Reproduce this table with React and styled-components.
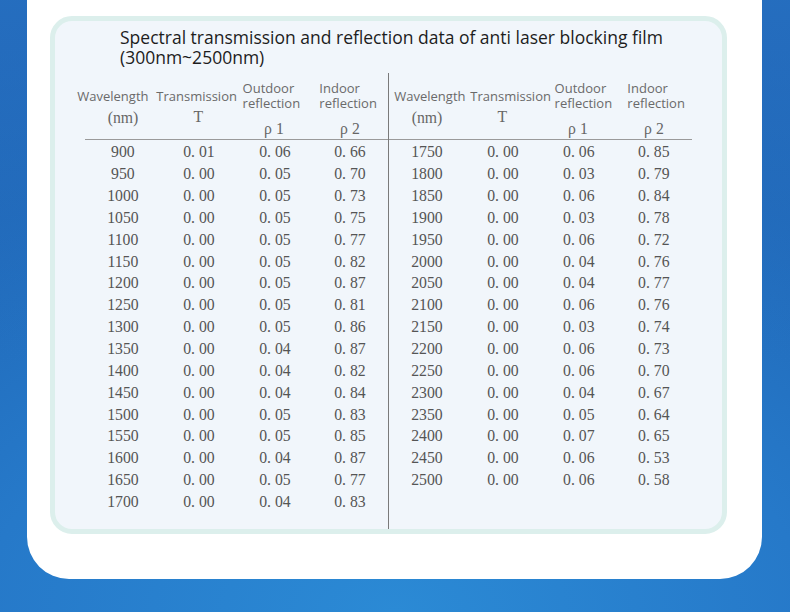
import React from 'react';
import styled, { createGlobalStyle } from 'styled-components';

const GlobalStyle = createGlobalStyle`
	html, body {
		margin: 0;
		padding: 0;
	}
	body {
		background: #2372c3;
	}
`;

const Page = styled.div`
	box-sizing: border-box;
	width: 790px;
	height: 612px;
	padding: 0 28px 0 27px;
	background:
		linear-gradient(180deg, rgba(42, 118, 200, 0.55) 0%, rgba(42, 118, 200, 0) 60%),
		radial-gradient(130% 100% at 50% 100%, #2b8ad5 0%, #2679c9 40%, #2068b8 75%, #1f63b3 100%);
	overflow: hidden;
`;

const Card = styled.div`
	box-sizing: border-box;
	height: 579px;
	padding: 16px 35px 45px 23px;
	background: #ffffff;
	border-radius: 0 0 42px 42px;
`;

const Panel = styled.div`
	box-sizing: border-box;
	height: 518px;
	display: flex;
	flex-direction: column;
	background: #f1f6fb;
	border: 5px solid #dcefec;
	border-radius: 22px;
	padding: 6px 0 0 30px;
`;

const Title = styled.h1`
	margin: 0 0 6px 35px;
	font-family: 'Open Sans', 'Noto Sans', sans-serif;
	font-size: 17.5px;
	font-weight: 400;
	line-height: 20px;
	color: #1d1d1d;
`;

const Table = styled.div`
	flex: 1;
	display: flex;
	width: 607px;
`;

const Half = styled.div`
	flex: ${(p) => (p.$right ? '0 0 304px' : '0 0 303px')};
	box-sizing: border-box;
	border-left: ${(p) => (p.$right ? '1px solid #7a7a7a' : 'none')};
	display: flex;
	flex-direction: column;
`;

const Head = styled.div`
	height: 66px;
	display: grid;
	grid-template-columns: repeat(4, minmax(0, 1fr));
	border-bottom: 1px solid #9a9a9a;
`;

const HeadCell = styled.div`
	min-width: 0;
	display: flex;
	flex-direction: column;
	align-items: center;
	padding-top: ${(p) => (p.$stacked ? 8 : 16)}px;
`;

// header captions sit a little off the column centre in the source sheet
const LabelGroup = styled.div`
	display: flex;
	flex-direction: column;
	align-items: flex-start;
	margin-left: ${(p) => (p.$shift > 0 ? p.$shift * 2 : 0)}px;
	margin-right: ${(p) => (p.$shift < 0 ? -p.$shift * 2 : 0)}px;
`;

const Label = styled.span`
	font-family: 'Open Sans', 'Noto Sans', sans-serif;
	font-size: 13px;
	line-height: 15px;
	color: #6a6a6a;
	white-space: nowrap;
`;

const Sub = styled.span`
	margin-top: ${(p) => p.$gap}px;
	font-family: 'Liberation Serif', serif;
	font-size: 17.5px;
	line-height: 20px;
	color: #666;
	transform: scaleX(0.9);
`;

const Row = styled.div`
	height: 21.85px;
	display: grid;
	grid-template-columns: repeat(4, minmax(0, 1fr));
	align-items: center;
	&:first-child {
		margin-top: 1px;
	}
`;

const Cell = styled.span`
	text-align: center;
	font-family: 'Liberation Serif', serif;
	font-size: 17.5px;
	line-height: 21px;
	color: #555;
	transform: scaleX(0.9);
	white-space: pre;
`;

const left = [
	[900, '0.01', '0.06', '0.66'],
	[950, '0.00', '0.05', '0.70'],
	[1000, '0.00', '0.05', '0.73'],
	[1050, '0.00', '0.05', '0.75'],
	[1100, '0.00', '0.05', '0.77'],
	[1150, '0.00', '0.05', '0.82'],
	[1200, '0.00', '0.05', '0.87'],
	[1250, '0.00', '0.05', '0.81'],
	[1300, '0.00', '0.05', '0.86'],
	[1350, '0.00', '0.04', '0.87'],
	[1400, '0.00', '0.04', '0.82'],
	[1450, '0.00', '0.04', '0.84'],
	[1500, '0.00', '0.05', '0.83'],
	[1550, '0.00', '0.05', '0.85'],
	[1600, '0.00', '0.04', '0.87'],
	[1650, '0.00', '0.05', '0.77'],
	[1700, '0.00', '0.04', '0.83'],
];

const right = [
	[1750, '0.00', '0.06', '0.85'],
	[1800, '0.00', '0.03', '0.79'],
	[1850, '0.00', '0.06', '0.84'],
	[1900, '0.00', '0.03', '0.78'],
	[1950, '0.00', '0.06', '0.72'],
	[2000, '0.00', '0.04', '0.76'],
	[2050, '0.00', '0.04', '0.77'],
	[2100, '0.00', '0.06', '0.76'],
	[2150, '0.00', '0.03', '0.74'],
	[2200, '0.00', '0.06', '0.73'],
	[2250, '0.00', '0.06', '0.70'],
	[2300, '0.00', '0.04', '0.67'],
	[2350, '0.00', '0.05', '0.64'],
	[2400, '0.00', '0.07', '0.65'],
	[2450, '0.00', '0.06', '0.53'],
	[2500, '0.00', '0.06', '0.58'],
];

// the source sheet prints decimals with a wide full stop
const fmt = (v) => String(v).replace('.', '. ');

function TableHalf({ rows, right: isRight, shifts }) {
	return (
		<Half $right={isRight}>
			<Head>
				<HeadCell>
					<LabelGroup $shift={shifts[0]}>
						<Label>Wavelength</Label>
					</LabelGroup>
					<Sub $gap={3}>(nm)</Sub>
				</HeadCell>
				<HeadCell>
					<LabelGroup $shift={shifts[1]}>
						<Label>Transmission</Label>
					</LabelGroup>
					<Sub $gap={2}>T</Sub>
				</HeadCell>
				<HeadCell $stacked>
					<LabelGroup $shift={shifts[2]}>
						<Label>Outdoor</Label>
						<Label>reflection</Label>
					</LabelGroup>
					<Sub $gap={7}>ρ 1</Sub>
				</HeadCell>
				<HeadCell $stacked>
					<LabelGroup $shift={shifts[3]}>
						<Label>Indoor</Label>
						<Label>reflection</Label>
					</LabelGroup>
					<Sub $gap={7}>ρ 2</Sub>
				</HeadCell>
			</Head>
			<div>
				{rows.map((r) => (
					<Row key={r[0]}>
						{r.map((v, i) => (
							<Cell key={i}>{i === 0 ? v : fmt(v)}</Cell>
						))}
					</Row>
				))}
			</div>
		</Half>
	);
}

export default function App() {
	return (
		<>
			<GlobalStyle />
			<Page>
				<Card>
					<Panel>
						<Title>
							Spectral transmission and reflection data of anti laser blocking film
							<br />
							(300nm~2500nm)
						</Title>
						<Table>
							<TableHalf rows={left} shifts={[-10, -2, -3, -2]} />
							<TableHalf rows={right} right shifts={[3, 8, 5, 2]} />
						</Table>
					</Panel>
				</Card>
			</Page>
		</>
	);
}
